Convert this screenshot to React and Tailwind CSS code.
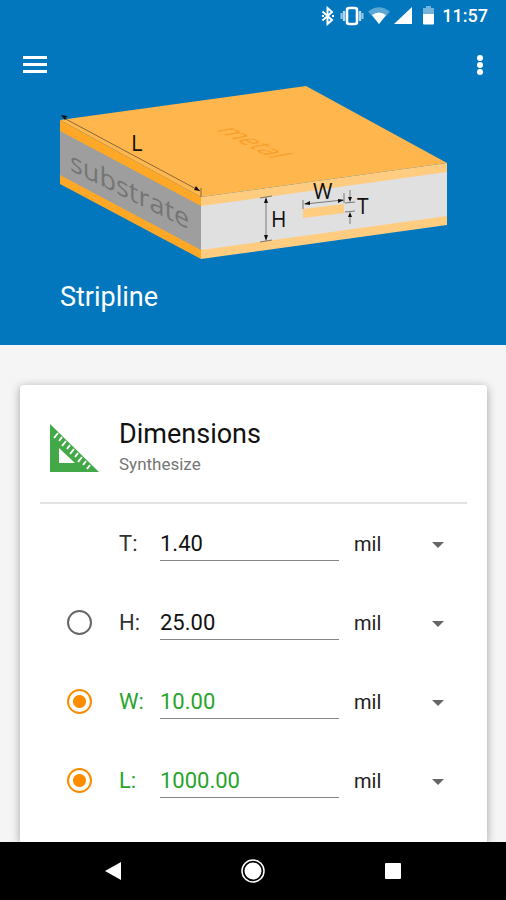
import React, { useState } from "react";

const initialRows = [
  { key: "T", value: "1.40", unit: "mil", selectable: false, selected: false },
  { key: "H", value: "25.00", unit: "mil", selectable: true, selected: false },
  { key: "W", value: "10.00", unit: "mil", selectable: true, selected: true },
  { key: "L", value: "1000.00", unit: "mil", selectable: true, selected: true },
];

const units = ["mil", "mm", "cm", "inch"];

const StatusBar = () => (
  <div className="flex h-8 items-center justify-end gap-1 pr-[18px] text-white">
    <svg width="16" height="20" viewBox="0 0 16 20" fill="none" stroke="currentColor" strokeWidth="2">
      <path d="M2.500 5.500l9.500 8.500-4.500 4V2l4.500 4-9.500 8.500" />
      <path d="M2 10h2M12 10h2" />
    </svg>
    <svg width="24" height="20" viewBox="0 0 24 20" fill="none" stroke="currentColor">
      <rect x="7" y="2" width="10" height="16" rx="2" strokeWidth="2.600" />
      <path d="M4 5v10M20 5v10" strokeWidth="2.400" opacity="0.700" />
      <path d="M1.500 7v6M22.500 7v6" strokeWidth="2" opacity="0.600" />
    </svg>
    <svg width="22" height="20" viewBox="0 0 22 20" fill="currentColor">
      <path d="M0 5.500Q11-3 22 5.500L11 18z" opacity="0.350" />
      <path d="M4 9Q11 4 18 9L11 18z" />
    </svg>
    <svg width="18" height="20" viewBox="0 0 18 20" fill="currentColor">
      <path d="M18 1v17H0z" />
    </svg>
    <svg width="22" height="20" viewBox="0 0 22 20" fill="currentColor">
      <path d="M10 0h5v2h3v7H7V2h3z" opacity="0.450" />
      <path d="M7 8h11v9.500a1 1 0 0 1-1 1H8a1 1 0 0 1-1-1z" />
    </svg>
    <span className="text-lg font-medium">11:57</span>
  </div>
);

const StriplineDrawing = () => (
  <svg viewBox="60 85 388 176" className="w-[388px] max-w-full" role="img" aria-label="Stripline">
    {/* faces */}
    <polygon points="60,120 306,86 447,163 201,197" fill="#ffb64c" />
    <polygon points="60,120 201,197 201,259 60,184" fill="#ffa726" />
    <polygon points="60,131 201,206 201,250 60,175" fill="#9e9e9e" />
    <polygon points="201,197 447,163 447,225 201,259" fill="#ffcc80" />
    <polygon points="201,206 447,172 447,216 201,250" fill="#e0e0e0" />
    <polygon points="303,209 344,204 344,213 303,218" fill="#ffcc80" />

    {/* dimension lines */}
    <g stroke="#333" strokeWidth="0.600" fill="none">
      <path d="M62 117L200 191M201 188v9" />
      <path d="M266 199v40M260 198l12-2M260 242l12-2" />
      <path d="M303 200v9M344 193v10M305 204l38-4" />
      <path d="M345 203l10-1M345 212l10-1M350 190v10M350 214v10" />
    </g>
    <g fill="#111">
      <path d="M61 115l6 1-2 4z" />
      <path d="M200 191l-6-1 2-4z" />
      <path d="M266 197l-2 6h4zM266 241l-2-6h4z" />
      <path d="M304 204l6-3v4zM344 200l-6-1v4z" />
      <path d="M350 202l-2-5h4zM350 212l-2 5h4z" />
    </g>

    <g className="font-['Open_Sans',sans-serif]" fill="#111">
      <text x="131" y="151" fontSize="22">L</text>
      <text x="271" y="227" fontSize="21">H</text>
      <text x="313" y="199" fontSize="21">W</text>
      <text x="357" y="214" fontSize="21">T</text>
      <text transform="matrix(1 0.500 0 1 70 170)" fontSize="27" fontWeight="500" fill="#757575">
        substrate
      </text>
      <text transform="matrix(0.800 0.400 -1.100 0.200 215 130)" fontSize="27" fill="#f9a02a">
        metal
      </text>
    </g>
  </svg>
);

const SetSquareIcon = () => (
  <svg width="50" height="50" viewBox="0 0 50 50" className="shrink-0" aria-hidden="true">
    <path d="M0 1L49 49H0zM9 25v15h16z" fill="#43a847" fillRule="evenodd" />
    <path
      d="M8 10l-4 5M12 14l-3 4M16 18l-4 5M20 22l-3 4M24 26l-4 5M28 30l-3 4M32 34l-4 5M36 38l-3 4M40 42l-3 4"
      stroke="#fff"
      strokeWidth="2"
    />
  </svg>
);

const DimensionRow = ({ row, onValue, onUnit, onToggle }) => (
  <div className="flex h-[79px] items-center">
    <div className="flex w-[79px] shrink-0 items-center pl-[27px]">
      {row.selectable && (
        <input
          type="radio"
          id={`pick-${row.key}`}
          name={`pick-${row.key}`}
          aria-label={`Solve for ${row.key}`}
          checked={row.selected}
          onClick={() => onToggle(row.key)}
          onChange={() => {}}
          className="size-[25px] appearance-none rounded-full border-2 border-[#666] checked:border-[#fb8c00] checked:bg-[radial-gradient(circle,#fb8c00_6px,transparent_7px)]"
        />
      )}
    </div>
    <label
      htmlFor={`value-${row.key}`}
      className={`w-[41px] shrink-0 text-[22px] ${row.selected ? "text-[#27a52b]" : "text-[#333]"}`}
    >
      {row.key}:
    </label>
    <input
      id={`value-${row.key}`}
      type="text"
      value={row.value}
      onChange={(e) => onValue(row.key, e.target.value)}
      className={`h-[34px] min-w-0 flex-1 border-b border-[#888] bg-transparent text-[22px] outline-none ${
        row.selected ? "text-[#27a52b]" : "text-[#111]"
      }`}
    />
    <div className="relative ml-[15px] mr-[23px] w-[90px] shrink-0">
      <select
        aria-label={`${row.key} unit`}
        value={row.unit}
        onChange={(e) => onUnit(row.key, e.target.value)}
        className="w-full appearance-none bg-transparent text-xl text-[#222] outline-none"
      >
        {units.map((u) => (
          <option key={u}>{u}</option>
        ))}
      </select>
      <svg
        width="12"
        height="6"
        viewBox="0 0 12 6"
        className="pointer-events-none absolute right-0 top-3"
        fill="#666"
      >
        <path d="M0 0h12L6 6z" />
      </svg>
    </div>
  </div>
);

const NavBar = () => (
  <nav className="flex h-[58px] shrink-0 justify-center bg-black text-white">
    <button type="button" aria-label="Back" className="flex w-[140px] items-center justify-center">
      <svg width="16" height="18" viewBox="0 0 16 18" fill="currentColor">
        <path d="M16 0v18L0 9z" />
      </svg>
    </button>
    <button type="button" aria-label="Home" className="flex w-[140px] items-center justify-center">
      <svg width="24" height="24" viewBox="0 0 24 24" fill="currentColor">
        <circle cx="12" cy="12" r="11" fill="none" stroke="currentColor" strokeWidth="1.500" />
        <circle cx="12" cy="12" r="8.500" />
      </svg>
    </button>
    <button type="button" aria-label="Recent apps" className="flex w-[140px] items-center justify-center">
      <span className="size-4 rounded-[1px] bg-white" />
    </button>
  </nav>
);

const App = () => {
  const [rows, setRows] = useState(initialRows);

  const update = (key, changes) => {
    setRows(rows.map((r) => (r.key === key ? { ...r, ...changes } : r)));
  };

  return (
    <div className="flex h-screen flex-col overflow-hidden bg-[#f5f5f5] font-[Roboto,sans-serif]">
      <header className="shrink-0 bg-[#0277bd] pb-8 text-white">
        <StatusBar />
        <div className="flex h-[53px] items-center justify-between px-[23px] pt-3">
          <button type="button" aria-label="Open menu" className="cursor-pointer">
            <svg width="24" height="18" viewBox="0 0 24 18" fill="currentColor">
              <path d="M0 0h24v3H0zM0 7h24v3H0zM0 14h24v3H0z" />
            </svg>
          </button>
          <button type="button" aria-label="More options" className="cursor-pointer">
            <svg width="6" height="22" viewBox="0 0 6 22" fill="currentColor">
              <circle cx="3" cy="4" r="3" />
              <circle cx="3" cy="11" r="3" />
              <circle cx="3" cy="18" r="3" />
            </svg>
          </button>
        </div>
        <div className="pl-[60px] pr-[58px]">
          <StriplineDrawing />
          <h1 className="mt-5 text-[27px] leading-8">Stripline</h1>
        </div>
      </header>

      <main className="min-h-0 flex-1 overflow-hidden pl-5 pr-[19px] pt-10">
        <section className="h-full rounded-t bg-white px-5 shadow-[0_2px_10px_rgba(0,0,0,0.35)]">
          <div className="flex h-[119px] items-center border-b-2 border-[#e2e2e2] pl-[10px] pt-2">
            <SetSquareIcon />
            <div className="pl-[19px]">
              <h2 className="text-[27px] leading-8 text-[#111]">Dimensions</h2>
              <p className="text-[17px] leading-7 text-[#757575]">Synthesize</p>
            </div>
          </div>
          {rows.map((row) => (
            <DimensionRow
              key={row.key}
              row={row}
              onValue={(key, value) => update(key, { value })}
              onUnit={(key, unit) => update(key, { unit })}
              onToggle={(key) => update(key, { selected: !row.selected })}
            />
          ))}
        </section>
      </main>

      <NavBar />
    </div>
  );
};

export default App;
